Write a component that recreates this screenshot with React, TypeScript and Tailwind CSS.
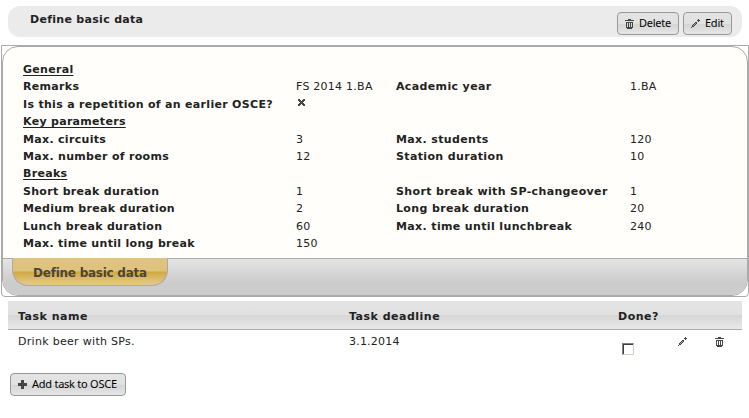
import React from "react";

type PixelProps = { rows: string[]; className?: string };

function PixelIcon({ rows, className }: PixelProps) {
  const w = rows[0].length;
  return (
    <svg width={w} height={rows.length} viewBox={`0 0 ${w} ${rows.length}`} shapeRendering="crispEdges" className={`block shrink-0 ${className ?? ""}`}>
      {rows.flatMap((row, y) =>
        row.split("").map((c, x) =>
          c === "." ? null : <rect key={`${x}-${y}`} x={x} y={y} width="1" height="1" fill={c === "#" ? "#454545" : "#a0a0a0"} />
        )
      )}
    </svg>
  );
}

const TRASH = ["...###...", "#########", ".........", ".#######.", ".#.#.#.#.", ".#.#.#.#.", ".#.#.#.#.", ".#.#.#.#.", ".#######.", "..#####.."];
const PENCIL = [".......#.", "......###", ".......#.", "....##...", "...#o#...", "..#o#....", ".#o#.....", ".##......", "#........"];
const PLUS = ["...###...", "...###...", "...###...", "#########", "#########", "#########", "...###...", "...###...", "...###..."];
const CROSS = ["##...##", "###.###", ".#####.", "..###..", ".#####.", "###.###", "##...##"];

function Button({ icon, label, className }: { icon: string[]; label: string; className: string }) {
  return (
    <button className={`flex h-[23px] items-center rounded border border-[#999] bg-[linear-gradient(#e4e4e4_0%,#e1e1e1_50%,#d4d4d4_52%,#e6e6e6_100%)] pl-[7px] font-['Noto_Sans','Open_Sans',sans-serif] text-[11px] leading-[20px] tracking-[-0.25px] whitespace-nowrap text-black ${className}`}>
      <PixelIcon rows={icon} />
      <span className="ml-[5px] pb-px">{label}</span>
    </button>
  );
}

type Row = { section?: string; a?: string; av?: string; b?: string; bv?: string; cross?: boolean };
const ROWS: Row[] = [
  { section: "General" },
  { a: "Remarks", av: "FS 2014 1.BA", b: "Academic year", bv: "1.BA" },
  { a: "Is this a repetition of an earlier OSCE?", cross: true },
  { section: "Key parameters" },
  { a: "Max. circuits", av: "3", b: "Max. students", bv: "120" },
  { a: "Max. number of rooms", av: "12", b: "Station duration", bv: "10" },
  { section: "Breaks" },
  { a: "Short break duration", av: "1", b: "Short break with SP-changeover", bv: "1" },
  { a: "Medium break duration", av: "2", b: "Long break duration", bv: "20" },
  { a: "Lunch break duration", av: "60", b: "Max. time until lunchbreak", bv: "240" },
  { a: "Max. time until long break", av: "150" },
];

export default function App() {
  return (
    <div className="h-[418px] w-[749px] overflow-hidden bg-white pt-[6px] font-['DejaVu_Sans',sans-serif] text-[11px] text-[#222]">
      <header className="ml-2 flex h-[31px] w-[734px] justify-between rounded-[12px] bg-[#ebebeb] pl-[22px]">
        <h1 className="pt-[6px] leading-[16px] font-bold tracking-[0.3px]">Define basic data</h1>
        <div className="flex gap-1 pt-[6px] pr-[10px]">
          <Button icon={TRASH} label="Delete" className="w-[62px]" />
          <Button icon={PENCIL} label="Edit" className="w-[49px]" />
        </div>
      </header>

      <section className="mt-2 ml-px h-[252px] w-[748px] rounded-b border border-[#aaa] bg-white">
        <div className="flex h-[250px] flex-col overflow-hidden rounded-[16px] border border-[#aaa] bg-[#fffefa]">
          <div className="h-[211px] pt-[13.8px] pl-[20px]">
            {ROWS.map((r, i) => (
              <div key={i} className="grid h-[17.4px] grid-cols-[273px_100px_234px_100px] items-center leading-[17px] whitespace-nowrap">
                <span className={r.section ? "font-bold tracking-[0.3px] underline decoration-1 underline-offset-[2px]" : "font-bold tracking-[0.31px]"}>{r.section ?? r.a}</span>
                <span className="tracking-[0.25px]">{r.cross ? <PixelIcon rows={CROSS} className="mb-[4px] ml-[2px]" /> : r.av}</span>
                <span className="font-bold tracking-[0.36px]">{r.b}</span>
                <span className="tracking-[0.25px]">{r.bv}</span>
              </div>
            ))}
          </div>
          <div className="h-[37px] border-t border-[#aaa] bg-[linear-gradient(#e4e4e4_0%,#cccccc_65%,#cccccc_100%)] pl-[9px]">
            <div className="-mt-px h-[28px] w-[156px] rounded-b-[16px] border border-t-0 border-[#aaa] bg-[linear-gradient(#dfc582_0%,#dfc27a_48%,#d0a945_52%,#e6cb8c_100%)] pt-[7px] text-center text-[12px] leading-[17px] font-bold tracking-[-0.25px] text-[#4a443b]">Define basic data</div>
          </div>
        </div>
      </section>

      <section className="mt-1 ml-2 w-[734px]">
        <div className="grid h-[29px] grid-cols-[331px_269px_1fr] border-b border-[#aaa] bg-[linear-gradient(#e4e4e4_0%,#e1e1e1_48%,#d6d6d6_52%,#e9e9e9_100%)] pt-px pl-[10px] leading-[29px] font-bold tracking-[0.5px]">
          <span>Task name</span><span>Task deadline</span><span>Done?</span>
        </div>
        <div className="grid h-[43px] grid-cols-[331px_273px_56px_37px_1fr] pl-[10px]">
          <span className="pt-[3px] leading-[17px] tracking-[0.3px]">Drink beer with SPs.</span>
          <span className="pt-[3px] leading-[17px] tracking-[0.2px]">3.1.2014</span>
          <span className="mt-[13px] size-3 border border-t-[#808080] border-r-[#d4d0c8] border-b-[#d4d0c8] border-l-[#808080] bg-white shadow-[inset_1px_1px_#404040]" />
          <PixelIcon rows={PENCIL} className="mt-[7px]" />
          <PixelIcon rows={TRASH} className="mt-[7px]" />
        </div>
      </section>
      <Button icon={PLUS} label="Add task to OSCE" className="ml-[10px] w-[116px]" />
    </div>
  );
}
